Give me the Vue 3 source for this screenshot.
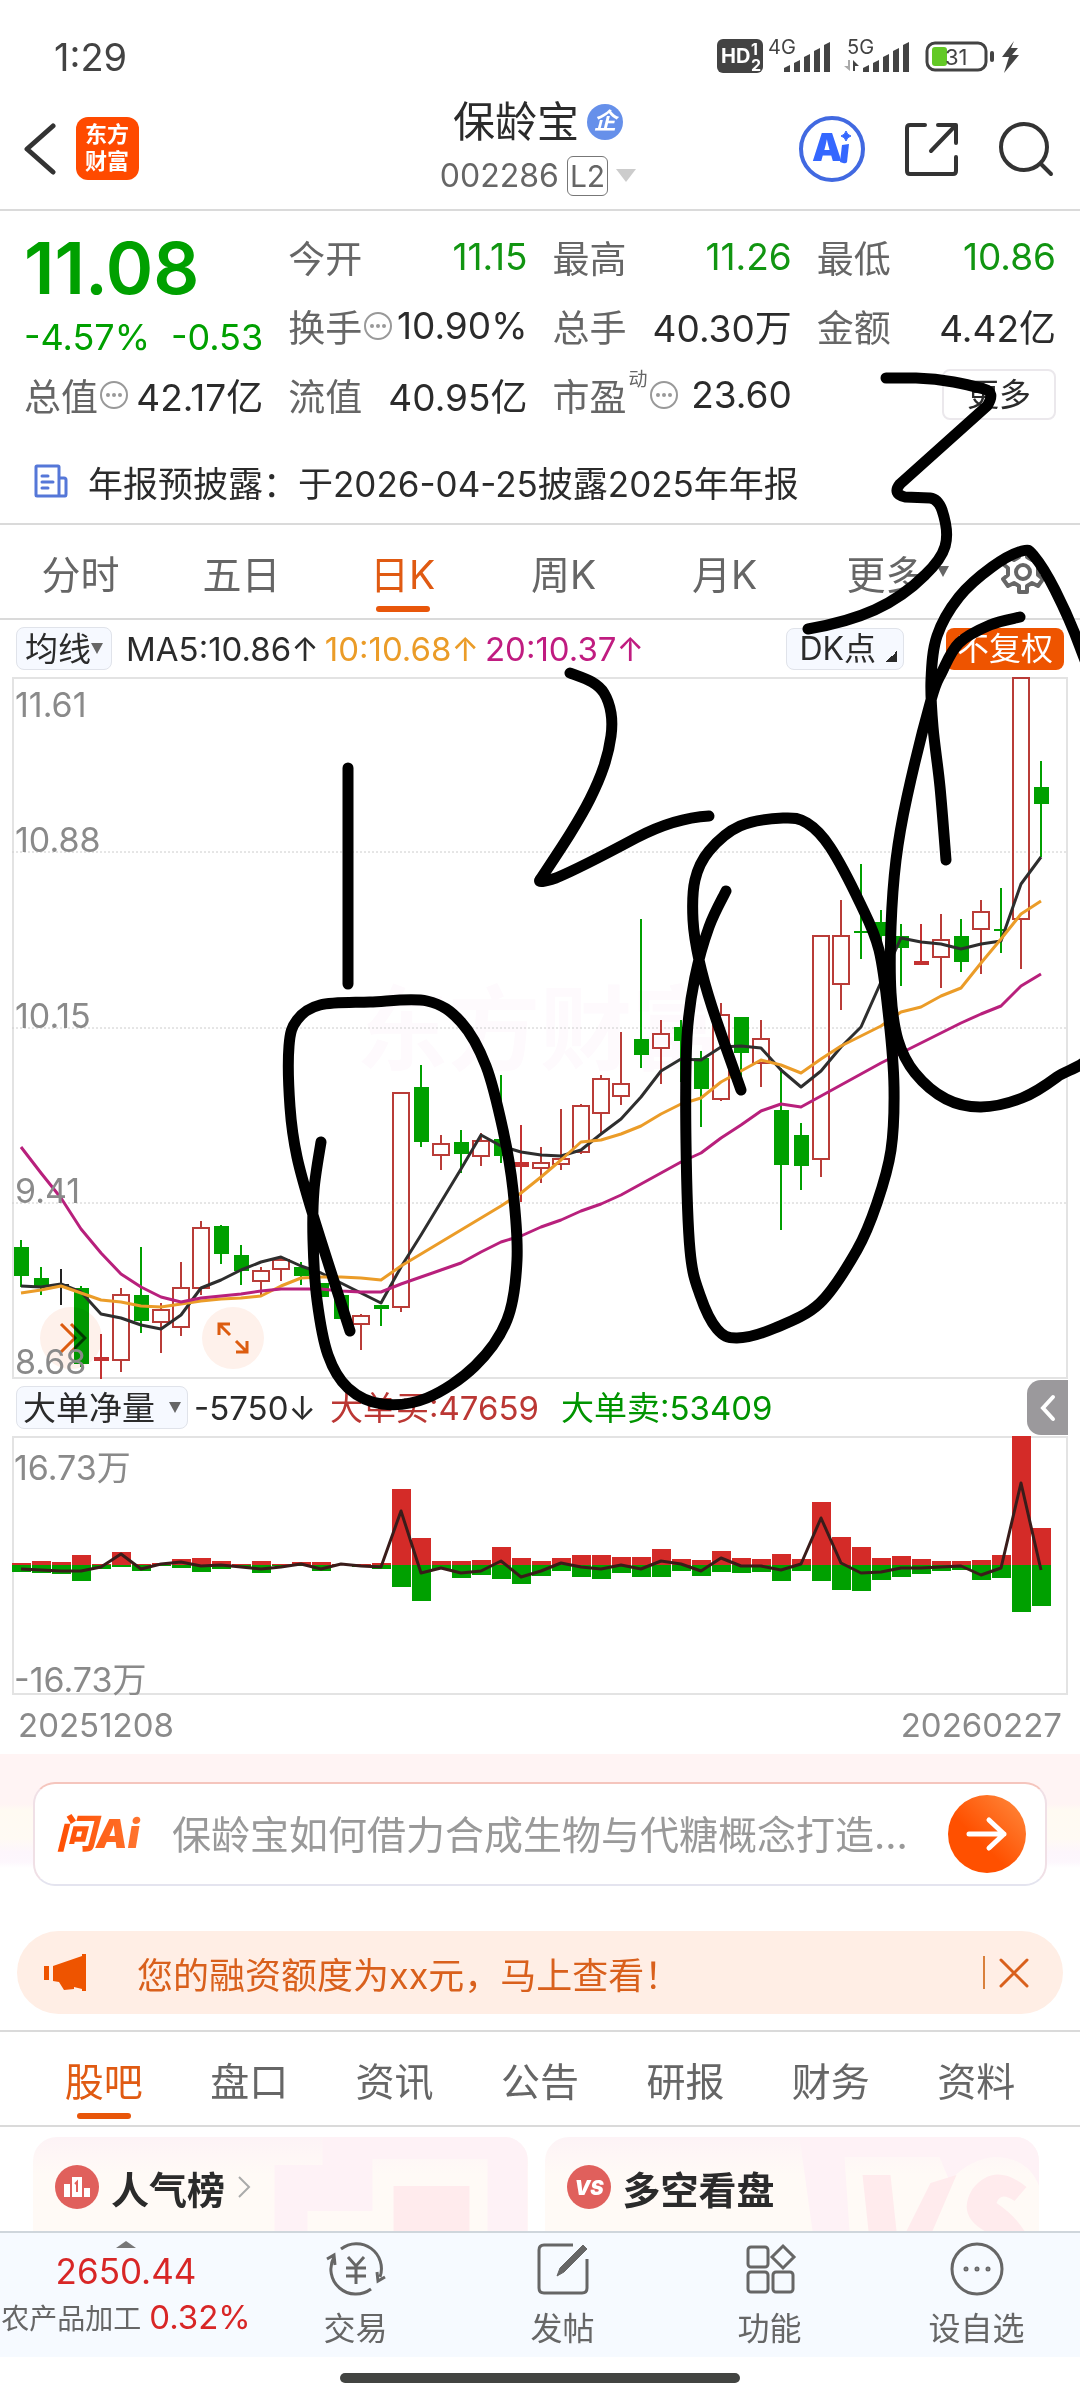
<template>
  <div class="page">
    <div class="status-bar">
      <span class="clock">1:29</span>
      <svg class="status-icons" viewBox="0 -8 304 56" aria-hidden="true">
        <rect x="0" y="2" width="46" height="34" rx="6" fill="#434343" />
        <text x="4" y="26" class="hd">HD</text>
        <text x="34" y="18" class="hd-num">1</text>
        <text x="34" y="34" class="hd-num">2</text>
        <text x="51" y="17" class="net">4G</text>
        <g fill="#434343">
          <path v-for="(h, i) in signal" :key="'a' + i" :d="signalBar(67 + i * 10, h)" />
          <path v-for="(h, i) in signal" :key="'b' + i" :d="signalBar(146 + i * 10, h)" />
        </g>
        <text x="130" y="17" class="net">5G</text>
        <path d="M133 23V34L127 29H131V23Z" fill="#aaa" />
        <path d="M136 34V23L142 29H138V34Z" fill="#434343" />
        <rect x="210" y="6" width="59" height="27" rx="8" fill="#fff" stroke="#434343" stroke-width="3" />
        <rect x="215" y="10" width="15" height="19" rx="3" fill="#63c926" />
        <text x="228" y="28" class="net battery">31</text>
        <rect x="273" y="14" width="4" height="11" rx="2" fill="#434343" />
        <path d="M297 4L285 20H292L287 36L302 18H295L301 11H294Z" fill="#434343" />
      </svg>
    </div>

    <header class="header">
      <div class="header-left">
        <button class="icon-btn" aria-label="返回">
          <svg width="34" height="56" viewBox="0 0 34 56">
            <path d="M31 5L5 28L31 51" fill="none" stroke="#333" stroke-width="5" stroke-linecap="round" stroke-linejoin="round" />
          </svg>
        </button>
        <a href="#" class="brand">东方财富</a>
      </div>
      <div class="header-title">
        <h1 class="stock-name">保龄宝<span class="ent">企</span></h1>
        <div class="stock-code">
          002286<span class="level">L2</span>
          <svg width="20" height="14" viewBox="0 0 20 14"><path d="M0 0H20L10 13Z" fill="#ccc" /></svg>
        </div>
      </div>
      <div class="header-actions">
        <button class="icon-btn" aria-label="Ai">
          <svg width="68" height="68" viewBox="0 0 68 68">
            <circle cx="34" cy="34" r="31" fill="none" stroke="#4169e1" stroke-width="4" />
            <text x="14" y="46" class="ai-mark">A</text>
            <path d="M44 30L51 29L49 47Q48 49 45 48L42 47Z" fill="#3467ff" />
            <path d="M48 16Q49 20 53 21Q49 22 48 26Q47 22 43 21Q47 20 48 16Z" fill="#3467ff" stroke="#3467ff" />
          </svg>
        </button>
        <button class="icon-btn" aria-label="分享">
          <svg width="56" height="56" viewBox="0 0 56 56" fill="none" stroke="#333" stroke-width="4" stroke-linecap="round" stroke-linejoin="round">
            <path d="M21 4H6Q3 4 3 7V50Q3 53 6 53H49Q52 53 52 50V36M34 4H52V22M51 5L27 30" />
          </svg>
        </button>
        <button class="icon-btn" aria-label="搜索">
          <svg width="56" height="56" viewBox="0 0 56 56" fill="none" stroke="#333" stroke-width="4" stroke-linecap="round">
            <circle cx="26" cy="26" r="23" />
            <path d="M43 43L53 53" />
          </svg>
        </button>
      </div>
    </header>

    <section class="quote">
      <div class="quote-main">
        <div class="price">11.08</div>
        <div class="change"><span>-4.57%</span><span>-0.53</span></div>
      </div>
      <div v-for="item in quotes" :key="item.label" class="quote-item">
        <span class="quote-label">
          {{ item.label }}<sup v-if="item.sup">{{ item.sup }}</sup>
          <svg v-if="item.tip" width="28" height="28" viewBox="0 0 28 28">
            <circle cx="14" cy="14" r="13" fill="none" stroke="#999" stroke-width="2" />
            <circle v-for="x in [8, 14, 20]" :key="x" :cx="x" cy="14" r="2" fill="#999" />
          </svg>
        </span>
        <span :class="['quote-value', { down: item.down }]">{{ item.value }}</span>
      </div>
      <div class="quote-item quote-more"><button class="more-btn">更多</button></div>
    </section>

    <a href="#" class="news">
      <svg width="34" height="34" viewBox="0 0 34 34" fill="none" stroke="#5577d8" stroke-width="3" stroke-linecap="round" stroke-linejoin="round">
        <path d="M25 32H3Q2 32 2 31V3Q2 2 3 2H24Q25 2 25 3V32H31Q32 32 32 30V16Q32 14 30 14H26" />
        <path d="M8 12H14M8 18H19M8 24H14" />
      </svg>
      <span>年报预披露：于2026-04-25披露2025年年报</span>
    </a>

    <nav class="period-tabs">
      <button
        v-for="p in periods"
        :key="p"
        :class="['tab', { active: p === activePeriod }]"
        @click="activePeriod = p"
      >
        {{ p }}<i v-if="p === '更多'" class="caret"></i>
      </button>
      <button class="gear" aria-label="设置">
        <svg width="48" height="48" viewBox="0 0 48 48" fill="none" stroke="#666" stroke-width="4">
          <path d="M20 3H28V9L33 12L39 9L44 16L39 20V27L44 31L39 38L33 35L28 38V44H20V38L15 35L9 38L4 31L9 27V20L4 16L9 9L15 12L20 9Z" stroke-linejoin="round" />
          <circle cx="24" cy="24" r="7" />
        </svg>
      </button>
    </nav>

    <div class="indicator-bar">
      <label class="picker">
        <select aria-label="主图指标"><option>均线</option></select><i class="caret"></i>
      </label>
      <span class="ma">MA5:10.86↑</span>
      <span class="ma ma10">10:10.68↑</span>
      <span class="ma ma20">20:10.37↑</span>
      <span class="spacer"></span>
      <button class="chip dk">DK点<i class="corner"></i></button>
      <button class="chip adjust">不复权</button>
    </div>

    <div class="chart">
      <svg class="chart-svg" viewBox="0 677 1056 702">
        <text x="528" y="1063" class="watermark">东方财富</text>
        <rect x="1" y="678" width="1054" height="700" fill="none" stroke="#e3e3e3" stroke-width="2" />
        <path d="M0 852H1056M0 1028H1056M0 1203H1056" stroke="#ccc" stroke-width="1" stroke-dasharray="2 2" />
        <g v-for="(c, i) in candles" :key="i">
          <template v-if="c[0] === 'r'">
            <path :d="`M${cx(i)} ${c[3]}V${c[1]}M${cx(i)} ${c[2]}V${c[4]}`" class="rise" />
            <rect :x="cx(i) - 8" :y="c[1] + 1" width="16" :height="Math.max(c[2] - c[1] - 2, 2)" class="rise" />
          </template>
          <template v-else>
            <path :d="`M${cx(i)} ${c[3]}V${c[4]}`" :stroke="colors[c[0]]" stroke-width="2" />
            <rect :x="cx(i) - 7" :y="c[1]" width="15" :height="c[2] - c[1]" :fill="colors[c[0]]" />
          </template>
        </g>
        <polyline :points="linePoints(ma5)" class="line" stroke="#2e2e2e" />
        <polyline :points="linePoints(ma10)" class="line" stroke="#eb9c28" />
        <polyline :points="linePoints(ma20)" class="line" stroke="#b8207c" />
      </svg>
      <div class="float-btns">
        <button class="float-btn" aria-label="展开">
          <svg width="32" height="32" viewBox="0 0 32 32"><path d="M6 2L20 16L6 30M16 2L30 16L16 30" /></svg>
        </button>
        <button class="float-btn" aria-label="全屏">
          <svg width="32" height="32" viewBox="0 0 32 32"><path d="M2 13V2H13M2 2L13 13M30 19V30H19M30 30L19 19" /></svg>
        </button>
      </div>
      <svg class="chart-svg scale overlay" viewBox="0 677 1056 702">
        <text x="3" y="717">11.61</text>
        <text x="3" y="852">10.88</text>
        <text x="3" y="1028">10.15</text>
        <text x="3" y="1203">9.41</text>
        <text x="3" y="1374">8.68</text>
      </svg>
    </div>

    <div class="indicator-bar second">
      <label class="picker wide">
        <select aria-label="副图指标"><option>大单净量</option></select><i class="caret"></i>
      </label>
      <span class="ma">-5750↓</span>
      <span class="ma buy">大单买:47659</span>
      <span class="ma sell">大单卖:53409</span>
      <span class="spacer"></span>
      <button class="collapse" aria-label="收起">
        <svg width="16" height="28" viewBox="0 0 16 28"><path d="M13 3L3 14L13 25" fill="none" stroke="#fff" stroke-width="4" stroke-linecap="round" /></svg>
      </button>
    </div>

    <div class="chart">
      <svg class="chart-svg scale" viewBox="0 0 1056 259">
        <rect x="1" y="1" width="1054" height="257" fill="none" stroke="#e3e3e3" stroke-width="2" />
        <g v-for="(v, i) in volumes" :key="i">
          <rect :x="i * 20" :y="129 - v[0]" width="19" :height="v[0]" fill="#d42b28" />
          <rect :x="i * 20" y="129" width="19" :height="v[1]" fill="#00a000" />
        </g>
        <polyline :points="netPoints" class="line" stroke="#3a1c1a" />
        <text x="2" y="44">16.73万</text>
        <text x="2" y="256">-16.73万</text>
      </svg>
    </div>
    <div class="dates"><span>20251208</span><span>20260227</span></div>

    <section class="ask">
      <form class="ask-box" @submit.prevent>
        <span class="ask-logo">问Ai</span>
        <input type="text" aria-label="问Ai" placeholder="保龄宝如何借力合成生物与代糖概念打造..." />
        <button class="ask-btn" aria-label="发送">
          <svg width="42" height="36" viewBox="0 0 42 36" fill="none" stroke="#fff" stroke-width="5" stroke-linecap="round" stroke-linejoin="round">
            <path d="M3 18H38M23 4L38 18L23 32" />
          </svg>
        </button>
      </form>
    </section>

    <div class="notice">
      <svg width="44" height="38" viewBox="0 0 44 38" fill="#ee5400">
        <path d="M0 12H5V26H0ZM9 12L38 2V0H42V37H38V35L30 33V35L20 36L15 28L9 27Z" />
      </svg>
      <a href="#" class="notice-text">您的融资额度为xx元，马上查看！</a>
      <button class="notice-close" aria-label="关闭">
        <svg width="30" height="30" viewBox="0 0 30 30"><path d="M2 2L28 28M28 2L2 28" stroke="#d9601c" stroke-width="3" stroke-linecap="round" /></svg>
      </button>
    </div>

    <nav class="info-tabs">
      <button
        v-for="t in infoTabs"
        :key="t"
        :class="['tab', { active: t === activeInfo }]"
        @click="activeInfo = t"
      >
        {{ t }}
      </button>
    </nav>

    <div class="cards">
      <a href="#" class="card">
        <svg class="card-bg" viewBox="0 0 495 94" preserveAspectRatio="xMaxYMin slice">
          <path d="M242 94V28H290V0H495V94H455V22H340V74H275V94Z" fill="#fef2f6" />
          <rect x="361" y="49" width="76" height="45" fill="#ffebed" />
        </svg>
        <svg width="44" height="44" viewBox="0 0 44 44">
          <circle cx="22" cy="22" r="22" fill="#e0605c" />
          <path d="M9 19H15V32H9ZM17 12H27V32H17ZM29 23H35V32H29Z" fill="#fff" />
          <path d="M20 19L22 17V27" fill="none" stroke="#e0605c" stroke-width="2" />
        </svg>
        <span>人气榜</span>
        <svg width="14" height="24" viewBox="0 0 14 24"><path d="M2 2L12 12L2 22" fill="none" stroke="#aaa" stroke-width="2" /></svg>
      </a>
      <a href="#" class="card">
        <svg class="card-bg" viewBox="0 0 495 94" preserveAspectRatio="xMaxYMin slice">
          <path d="M255 0H495V50Q484 20 450 20Q425 22 405 44L395 20H300L305 94H268Z" fill="#fef2f6" />
          <path d="M318 38H346L352 94H324ZM386 46L412 38L388 94H362ZM482 50Q450 24 428 52Q412 78 440 94H480Q470 78 452 66Q456 54 470 64Z" fill="#ffebed" />
        </svg>
        <svg width="44" height="44" viewBox="0 0 44 44">
          <circle cx="22" cy="22" r="22" fill="#e0605c" />
          <text x="22" y="30" class="vs">VS</text>
        </svg>
        <span>多空看盘</span>
      </a>
    </div>

    <footer class="bottom-bar">
      <a href="#" class="index">
        <i class="up-caret"></i>
        <strong>2650.44</strong>
        <span>农产品加工 <b>0.32%</b></span>
      </a>
      <a href="#" class="action">
        <svg viewBox="0 0 60 56">
          <path d="M15 8A25 25 0 0 1 54 36M45 48A25 25 0 0 1 8 16M1 18L8 14L9 24M59 36L52 40L51 31M22 16L30 25L38 16M20 27H40M20 35H40M30 25V43" />
        </svg>
        <span>交易</span>
      </a>
      <a href="#" class="action">
        <svg viewBox="0 0 60 56">
          <path d="M40 4H11Q6 4 6 9V47Q6 52 11 52H49Q54 52 54 47V18" />
          <path d="M24 35L27 27L50 4L54 8L31 31Z" fill="#666" stroke-width="1" />
        </svg>
        <span>发帖</span>
      </a>
      <a href="#" class="action">
        <svg viewBox="0 0 60 56">
          <rect x="8" y="6" width="20" height="20" rx="3" />
          <rect x="8" y="31" width="20" height="20" rx="3" />
          <rect x="33" y="31" width="20" height="20" rx="3" />
          <path d="M43 5L54 16L43 27L32 16Z" />
        </svg>
        <span>功能</span>
      </a>
      <a href="#" class="action">
        <svg viewBox="0 0 60 56">
          <circle cx="30" cy="28" r="25" />
          <circle v-for="x in [19, 30, 41]" :key="x" :cx="x" cy="28" r="1" />
        </svg>
        <span>设自选</span>
      </a>
    </footer>
    <div class="home"><i></i></div>

    <!-- pen marks drawn over the page -->
    <svg class="ink" viewBox="0 0 1080 2400" preserveAspectRatio="xMidYMin meet" aria-hidden="true">
      <path d="M348 768V984" />
      <path d="M540 880Q537 884 556 878Q580 868 636 838Q674 818 709 816" />
      <path d="M886 378H916C945 379 965 384 984 389Q996 392 987 406L900 484Q892 494 905 497L930 498Q938 499 942 510C952 540 946 555 925 575C895 605 860 620 808 629" />
      <path v-for="(stroke, i) in strokes" :key="i" :d="smooth(stroke)" />
    </svg>
  </div>
</template>

<script setup>
import { ref, computed } from 'vue';

const activePeriod = ref('日K');
const periods = ['分时', '五日', '日K', '周K', '月K', '更多'];

const activeInfo = ref('股吧');
const infoTabs = ['股吧', '盘口', '资讯', '公告', '研报', '财务', '资料'];

const quotes = [
  { label: '今开', value: '11.15', down: true },
  { label: '最高', value: '11.26', down: true },
  { label: '最低', value: '10.86', down: true },
  { label: '换手', value: '10.90%', tip: true },
  { label: '总手', value: '40.30万' },
  { label: '金额', value: '4.42亿' },
  { label: '总值', value: '42.17亿', tip: true },
  { label: '流值', value: '40.95亿' },
  { label: '市盈', value: '23.60', sup: '动', tip: true },
];

const signal = [7, 12, 18, 24, 30];
const signalBar = (x, h) => `M${x} 35V${38 - h}L${x + 6} ${35 - h}V35Z`;

const colors = { g: '#00a000', k: '#222', s: '#c33232' };

// [kind, body top, body bottom, high, low]; r = hollow, s = solid red, g = green, k = flat
const candles = [
  ['g', 1247, 1276, 1240, 1287], ['g', 1278, 1286, 1267, 1295], ['k', 1284, 1286, 1269, 1305],
  ['g', 1288, 1364, 1286, 1367], ['s', 1357, 1361, 1334, 1379], ['r', 1294, 1361, 1288, 1372],
  ['g', 1295, 1321, 1247, 1333], ['r', 1309, 1323, 1303, 1353], ['r', 1287, 1328, 1262, 1336],
  ['r', 1227, 1289, 1221, 1295], ['g', 1226, 1254, 1225, 1264], ['g', 1255, 1271, 1245, 1285],
  ['r', 1270, 1282, 1267, 1297], ['r', 1259, 1270, 1257, 1281], ['g', 1267, 1276, 1262, 1285],
  ['g', 1283, 1297, 1283, 1297], ['g', 1295, 1319, 1290, 1319], ['r', 1315, 1325, 1314, 1350],
  ['g', 1305, 1309, 1305, 1326], ['r', 1092, 1308, 1092, 1312], ['g', 1087, 1142, 1065, 1147],
  ['r', 1143, 1156, 1135, 1170], ['g', 1142, 1154, 1130, 1173], ['r', 1140, 1157, 1133, 1166],
  ['g', 1139, 1156, 1075, 1163], ['s', 1162, 1167, 1125, 1202], ['r', 1162, 1169, 1147, 1183],
  ['r', 1158, 1165, 1109, 1170], ['r', 1105, 1153, 1104, 1154], ['r', 1078, 1114, 1075, 1134],
  ['r', 1083, 1097, 1032, 1105], ['g', 1039, 1055, 919, 1068], ['r', 1033, 1049, 1020, 1084],
  ['g', 1027, 1041, 1020, 1082], ['g', 1058, 1089, 1051, 1127], ['r', 1014, 1100, 1003, 1101],
  ['g', 1017, 1053, 1017, 1080], ['r', 1038, 1064, 1020, 1087], ['g', 1110, 1165, 1068, 1230],
  ['g', 1135, 1166, 1123, 1190], ['r', 935, 1160, 935, 1177], ['r', 935, 985, 900, 1010],
  ['g', 931, 933, 864, 959], ['g', 922, 936, 910, 945], ['g', 936, 948, 924, 986],
  ['s', 961, 965, 924, 961], ['r', 939, 958, 914, 988], ['g', 936, 962, 919, 972],
  ['r', 911, 930, 900, 974], ['g', 929, 931, 888, 953], ['r', 677, 920, 677, 969],
  ['g', 787, 804, 761, 857],
];

const ma5 = [
  1286, 1287, 1284, 1292, 1314, 1318, 1325, 1329, 1315, 1288, 1280, 1270, 1262, 1257, 1266, 1273, 1283, 1293,
  1303, 1267, 1235, 1202, 1169, 1135, 1146, 1152, 1155, 1156, 1150, 1134, 1119, 1097, 1071, 1059, 1060, 1047,
  1046, 1048, 1070, 1087, 1071, 1047, 1027, 982, 938, 942, 944, 949, 944, 941, 884, 857,
];
const ma10 = [
  1293, 1290, 1286, 1293, 1300, 1302, 1306, 1307, 1304, 1301, 1299, 1298, 1296, 1286, 1278, 1277, 1277, 1278,
  1280, 1266, 1254, 1242, 1230, 1218, 1206, 1193, 1177, 1160, 1142, 1140, 1134, 1126, 1114, 1104, 1098, 1082,
  1071, 1060, 1065, 1073, 1059, 1046, 1036, 1026, 1012, 1007, 996, 988, 963, 939, 914, 901,
];
const ma20 = [
  1147, 1173, 1198, 1229, 1253, 1274, 1287, 1297, 1302, 1298, 1296, 1294, 1291, 1289, 1289, 1289, 1291, 1292,
  1292, 1284, 1277, 1270, 1263, 1252, 1242, 1236, 1227, 1220, 1211, 1204, 1195, 1184, 1173, 1162, 1153, 1138,
  1125, 1111, 1104, 1107, 1096, 1085, 1074, 1063, 1053, 1043, 1033, 1023, 1014, 1006, 986, 974,
];

// [buy, sell, net]
const volumes = [
  [2, 7, -4], [4, 8, -5], [3, 9, -6], [10, 16, -6], [1, 4, -2], [13, 2, 11], [1, 6, -4], [2, 1, 1],
  [6, 3, 3], [7, 7, -1], [4, 4, 0], [1, 2, -2], [4, 8, -4], [1, 1, -2], [3, 1, 1], [3, 6, -4],
  [1, 0, 1], [1, 2, -1], [2, 4, -2], [76, 22, 54], [27, 36, -8], [4, 4, -3], [4, 13, -8], [5, 10, -6],
  [18, 14, 4], [7, 19, -12], [4, 11, -6], [7, 6, 2], [10, 12, -2], [10, 14, -4], [8, 8, 0], [8, 12, -4],
  [16, 12, 4], [6, 6, 1], [5, 11, -6], [14, 7, 7], [7, 8, -1], [6, 7, -1], [11, 16, -5], [6, 6, 1],
  [63, 16, 47], [28, 25, 2], [18, 26, -8], [7, 15, -7], [9, 12, -3], [6, 9, -3], [4, 6, -2], [4, 5, -1],
  [5, 15, -10], [10, 13, -3], [129, 47, 82], [37, 41, -5],
];

const cx = (i) => 9 + i * 20;
const linePoints = (values) => values.map((y, i) => `${cx(i)},${y}`).join(' ');
const netPoints = computed(() => volumes.map((v, i) => `${cx(i)},${129 - v[2]}`).join(' '));

const strokes = [
  [
    [570, 673], [592, 682], [604, 693], [611, 713], [611, 736], [604, 766], [590, 799], [570, 834], [540, 880],
  ],
  [
    [321, 1142], [314, 1190], [313, 1240], [317, 1300], [328, 1355], [348, 1388], [382, 1404], [427, 1398],
    [475, 1366], [507, 1320], [517, 1260], [513, 1190], [503, 1130], [486, 1066], [461, 1022], [427, 1001],
    [370, 1002], [320, 1005], [297, 1020], [289, 1046], [290, 1107], [297, 1157], [313, 1215], [350, 1331],
  ],
  [
    [726, 891], [709, 927], [695, 977], [687, 1037], [686, 1143], [690, 1250], [700, 1295], [717, 1329],
    [737, 1338], [775, 1328], [820, 1303], [857, 1250], [877, 1203], [891, 1150], [894, 1087], [889, 1020],
    [879, 950], [860, 903], [830, 847], [807, 823], [783, 818], [740, 826], [709, 851], [695, 880],
    [693, 920], [699, 960], [712, 1007], [741, 1090],
  ],
  [
    [1020, 617], [990, 625], [959, 643], [942, 672], [931, 700], [907, 797], [896, 860], [891, 927],
    [891, 993], [898, 1040], [915, 1073], [946, 1099], [981, 1107], [1022, 1098], [1057, 1077], [1100, 1040],
    [1130, 900], [1110, 740], [1080, 647], [1055, 590], [1034, 556], [1022, 551], [992, 567], [959, 597], [937, 636],
    [931, 680], [933, 727], [940, 787], [946, 860],
  ],
];

function smooth(p) {
  let d = `M${p[0][0]} ${p[0][1]}`;
  for (let i = 0; i < p.length - 1; i++) {
    const a = p[i - 1] || p[i];
    const b = p[i];
    const c = p[i + 1];
    const e = p[i + 2] || c;
    d += `C${b[0] + (c[0] - a[0]) / 6} ${b[1] + (c[1] - a[1]) / 6} ${c[0] - (e[0] - b[0]) / 6} ${c[1] - (e[1] - b[1]) / 6} ${c[0]} ${c[1]}`;
  }
  return d;
}
</script>

<style>
body {
  background: #fff;
}
</style>

<style scoped>
.page {
  position: relative;
  overflow: hidden;
  background: #fff;
  color: #2b2b2b;
  font-family: Inter, 'Noto Sans CJK SC', sans-serif;
}

.page * {
  box-sizing: border-box;
}

button,
select,
input {
  font: inherit;
  color: inherit;
  border: 0;
  background: none;
  padding: 0;
  margin: 0;
}

button {
  cursor: pointer;
}

a {
  color: inherit;
  text-decoration: none;
}

svg {
  display: block;
  flex: none;
}

i {
  flex: none;
}

/* status bar */
.status-bar {
  height: 88px;
  padding: 26px 59px 0 54px;
  display: flex;
  justify-content: space-between;
  align-items: center;
}

.clock {
  font-size: 38px;
  line-height: 40px;
  color: #434343;
}

.status-icons {
  width: 304px;
  height: 56px;
}

.hd {
  font-size: 20px;
  font-weight: 700;
  fill: #fff;
}

.hd-num {
  font-size: 16px;
  font-weight: 700;
  fill: #fff;
}

.net {
  font-size: 20px;
  fill: #434343;
}

.battery {
  font-size: 22px;
}

/* header */
.header {
  height: 123px;
  padding: 0 26px 0 22px;
  display: grid;
  grid-template-columns: 1fr auto 1fr;
  align-items: center;
  border-bottom: 2px solid #dadada;
}

.header-left {
  display: flex;
  align-items: center;
  gap: 20px;
}

.brand {
  width: 63px;
  height: 63px;
  padding: 4px 9px;
  border-radius: 12px;
  background: #ff4a00;
  color: #fff;
  font-size: 22px;
  font-weight: 700;
  line-height: 27px;
}

.stock-name {
  margin: 0;
  font-size: 42px;
  font-weight: 400;
  line-height: 50px;
  display: flex;
  justify-content: center;
  align-items: center;
  gap: 8px;
}

.ent {
  width: 36px;
  height: 36px;
  border-radius: 50%;
  background: #6690ea;
  color: #fff;
  font-size: 23px;
  font-weight: 700;
  font-style: italic;
  line-height: 34px;
  text-align: center;
}

.stock-code {
  display: flex;
  justify-content: center;
  align-items: center;
  gap: 8px;
  padding-top: 4px;
  font-size: 32px;
  line-height: 50px;
  color: #666;
}

.level {
  border: 1px solid #777;
  border-radius: 6px;
  font-size: 30px;
  line-height: 38px;
  padding: 0 2px;
}

.header-actions {
  display: flex;
  justify-content: flex-end;
  align-items: center;
  gap: 38px;
}

.ai-mark {
  font-size: 38px;
  font-weight: 900;
  fill: #3467ff;
}

/* quote */
.quote {
  padding: 11px 24px 0;
  display: grid;
  grid-template-columns: repeat(4, 1fr);
  grid-auto-rows: 69px;
  column-gap: 25px;
}

.quote-main {
  grid-row: span 2;
  color: #00a000;
}

.price {
  font-size: 72px;
  font-weight: 600;
  line-height: 92px;
}

.change {
  display: flex;
  justify-content: space-between;
  font-size: 36px;
  line-height: 46px;
}

.quote-item {
  display: flex;
  justify-content: space-between;
  align-items: center;
  white-space: nowrap;
}

.quote-label {
  display: flex;
  align-items: center;
  gap: 2px;
  font-size: 37px;
  color: #666;
}

.quote-label sup {
  align-self: flex-start;
  font-size: 19px;
  line-height: 24px;
}

.quote-value {
  font-size: 37px;
}

.down {
  color: #119511;
}

.quote-more {
  justify-content: flex-end;
}

.more-btn {
  width: 114px;
  height: 51px;
  border: 2px solid #ebe8ec;
  border-radius: 8px;
  font-size: 32px;
  line-height: 44px;
}

.news {
  display: flex;
  align-items: center;
  gap: 20px;
  height: 96px;
  padding: 10px 34px 0;
  border-bottom: 2px solid #dadada;
  font-size: 35px;
}

/* tabs */
.period-tabs {
  display: flex;
  height: 95px;
  border-bottom: 2px solid #dadada;
}

.tab {
  flex: 1;
  display: flex;
  justify-content: center;
  align-items: center;
  position: relative;
  font-size: 39px;
  color: #666;
}

.tab.active {
  color: #e05a12;
}

.tab.active::after {
  content: '';
  position: absolute;
  left: 50%;
  bottom: 6px;
  width: 54px;
  height: 6px;
  margin-left: -27px;
  border-radius: 3px;
  background: #e8560a;
}

.caret {
  border: 6px solid transparent;
  border-top: 11px solid #666;
  border-bottom: 0;
}

.tab .caret {
  margin-left: 12px;
  margin-right: -24px;
}

.gear {
  width: 114px;
  display: flex;
  justify-content: center;
  align-items: center;
}

/* indicator bars */
.indicator-bar {
  display: flex;
  align-items: center;
  gap: 6px;
  height: 57px;
  padding: 0 16px;
  font-size: 33px;
  line-height: 40px;
  white-space: nowrap;
}

.picker {
  display: flex;
  align-items: center;
  height: 43px;
  padding: 0 8px;
  margin-right: 8px;
  border: 1px solid #e0e3ea;
  border-radius: 8px;
  background: #f6f9ff;
}

.picker select {
  appearance: none;
  height: 40px;
  line-height: 40px;
}

.picker.wide {
  padding: 0 6px;
  margin-right: 0;
}

.picker.wide .caret {
  margin-left: 14px;
}

.ma10 {
  color: #eb9c28;
}

.ma20 {
  color: #c01c80;
}

.spacer {
  flex: 1;
}

.chip {
  height: 42px;
  border-radius: 8px;
  font-size: 32px;
  line-height: 40px;
}

.dk {
  display: flex;
  align-items: center;
  gap: 10px;
  padding: 0 6px 0 12px;
  margin-right: 36px;
  border: 1px solid #e0e3ea;
  background: #f6f9ff;
}

.corner {
  width: 11px;
  height: 11px;
  margin-top: 16px;
  background: linear-gradient(135deg, transparent 50%, #2b2b2b 50%);
}

.adjust {
  padding: 0 11px;
  background: #ee5400;
  color: #fff;
}

.second {
  padding-right: 12px;
}

.buy {
  color: #bb3734;
  margin: 0 16px 0 8px;
}

.sell {
  color: #009400;
}

.collapse {
  width: 41px;
  height: 55px;
  border-radius: 14px 0 0 14px;
  background: #9b999c;
  display: flex;
  justify-content: center;
  align-items: center;
}

/* charts */
.chart {
  position: relative;
  margin: 0 12px;
}

.chart-svg {
  width: 100%;
  height: auto;
  overflow: visible;
}

.scale text {
  font-size: 34px;
  fill: #8a8a8a;
}

.overlay {
  position: absolute;
  top: 0;
  left: 0;
  pointer-events: none;
}

.watermark {
  font-size: 92px;
  font-weight: 700;
  text-anchor: middle;
  fill: #fefafd;
}

.rise {
  fill: none;
  stroke: #b93c38;
  stroke-width: 2;
}

.line {
  fill: none;
  stroke-width: 3;
  stroke-linejoin: round;
}

.float-btns {
  position: absolute;
  left: 28px;
  bottom: 10px;
  display: flex;
  gap: 100px;
  mix-blend-mode: multiply;
}

.float-btn {
  width: 62px;
  height: 62px;
  border-radius: 50%;
  background: #fef1eb;
  display: flex;
  justify-content: center;
  align-items: center;
}

.float-btn path {
  fill: none;
  stroke: #dc5c10;
  stroke-width: 3;
}

.dates {
  display: flex;
  justify-content: space-between;
  padding: 0 18px;
  height: 59px;
  font-size: 33px;
  line-height: 60px;
  color: #8a8a8a;
}

/* ask */
.ask {
  padding: 28px 33px 45px;
  background: linear-gradient(#fff4f4 0, #fff4f4 50px, #fffaf2 56px, #fffaf4 85px, #fdf6fc 98px, #fdf7fd 108px, #fff 114px);
}

.ask-box {
  display: flex;
  align-items: center;
  height: 104px;
  padding: 0 19px 0 21px;
  border: 2px solid #f0e0e6;
  border-top-color: #f5c5bd;
  border-bottom-color: #e4e4ef;
  border-radius: 22px;
  background: #fff;
}

.ask-logo {
  width: 116px;
  font-size: 40px;
  font-weight: 900;
  font-style: italic;
  line-height: 44px;
  background: linear-gradient(90deg, #ff4d00, #ff8340);
  background-clip: text;
  -webkit-text-fill-color: transparent;
}

.ask-box input {
  flex: 1;
  min-width: 0;
  height: 60px;
  font-size: 39px;
  outline: 0;
}

.ask-box input::placeholder {
  color: #999;
  opacity: 1;
}

.ask-btn {
  width: 78px;
  height: 78px;
  border-radius: 50%;
  background: linear-gradient(45deg, #ff5000 40%, #ff8c40);
  display: flex;
  justify-content: center;
  align-items: center;
}

.notice {
  display: flex;
  align-items: center;
  height: 83px;
  margin: 0 17px 16px;
  padding: 0 34px 0 27px;
  border-radius: 42px;
  background: #ffeee5;
  color: #d9601c;
  font-size: 36px;
}

.notice-text {
  flex: 1;
  padding-left: 49px;
}

.notice-close {
  height: 33px;
  padding-left: 14px;
  border-left: 2px solid #d9803c;
}

.info-tabs {
  display: flex;
  height: 97px;
  padding: 0 31px;
  border-top: 2px solid #dadada;
  border-bottom: 2px solid #dadada;
}

.cards {
  display: grid;
  grid-template-columns: 1fr 1fr;
  gap: 17px;
  padding: 10px 41px 0 33px;
}

.card {
  position: relative;
  overflow: hidden;
  display: flex;
  align-items: center;
  gap: 12px;
  height: 94px;
  padding: 6px 22px 0;
  border-radius: 24px 24px 0 0;
  background: linear-gradient(#fdf3f6, #fffaf6 40%);
  font-size: 38px;
  font-weight: 700;
}

.card > :not(.card-bg) {
  position: relative;
}

.card-bg {
  position: absolute;
  inset: 0;
  width: 100%;
  height: 100%;
}

.vs {
  font-size: 20px;
  font-weight: 900;
  font-style: italic;
  text-anchor: middle;
  fill: #fff;
}

/* bottom bar */
.bottom-bar {
  display: flex;
  height: 126px;
  border-top: 2px solid #cfd6dc;
  background: #f6faff;
  white-space: nowrap;
}

.index {
  width: 252px;
  padding-top: 8px;
  display: flex;
  flex-direction: column;
  align-items: center;
  color: #666;
  font-size: 28px;
  line-height: 46px;
}

.index strong,
.index b {
  font-size: 35px;
  font-weight: 400;
  color: #d82626;
}

.index b {
  font-size: 33px;
}

.up-caret {
  border: 10px solid transparent;
  border-top: 0;
  border-bottom: 7px solid #777;
}

.action {
  flex: 1;
  padding-top: 8px;
  display: flex;
  flex-direction: column;
  align-items: center;
  gap: 10px;
  color: #666;
  font-size: 32px;
  line-height: 44px;
}

.action svg {
  width: 60px;
  height: 56px;
  fill: none;
  stroke: #666;
  stroke-width: 3;
}

.home {
  display: flex;
  justify-content: center;
  height: 43px;
  padding-top: 16px;
}

.home i {
  width: 37%;
  height: 10px;
  border-radius: 5px;
  background: #424441;
}

.ink {
  position: absolute;
  top: 0;
  left: 0;
  width: 100%;
  pointer-events: none;
}

.ink path {
  fill: none;
  stroke: #000;
  stroke-width: 11;
  stroke-linecap: round;
  stroke-linejoin: round;
}
</style>
